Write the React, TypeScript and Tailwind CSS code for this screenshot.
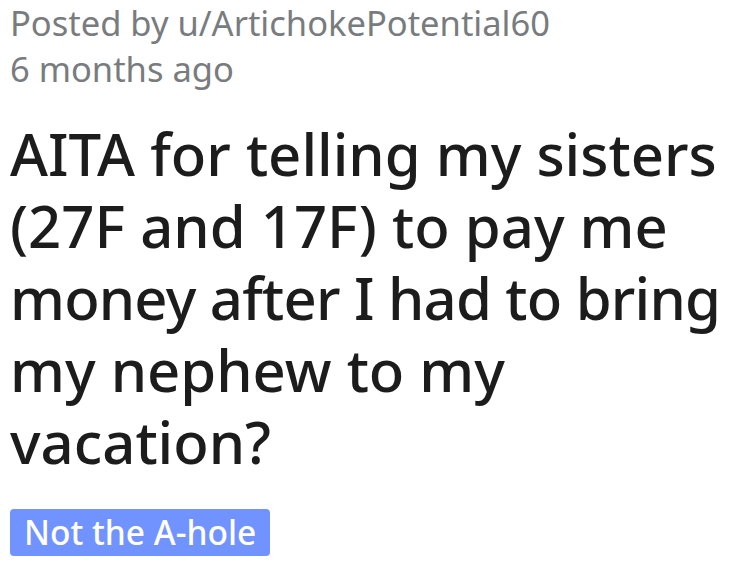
import React from "react";

export default function App() {
  return (
    <div
      className="w-[729px] h-[566px] bg-white overflow-hidden pl-[10px]"
      style={{ fontFamily: '"Noto Sans", "Open Sans", sans-serif' }}
    >
      <div className="text-[34.5px] leading-[46px] text-[#787c7e] font-normal whitespace-nowrap">
        <div>Posted by u/ArtichokePotential60</div>
        <div>6 months ago</div>
      </div>
      <h1 className="mt-[26px] text-[58px] leading-[72px] font-medium text-[#1c1c1c] whitespace-nowrap">
        AITA for telling my sisters
        <br />
        (27F and 17F) to pay me
        <br />
        <span className="tracking-[-0.8px]">money after I had to bring</span>
        <br />
        my nephew to my
        <br />
        vacation?
      </h1>
      <div className="mt-[31px] flex">
        <span className="inline-flex items-center h-[47px] px-[14px] rounded-[4px] bg-[#7193ff] text-white text-[33.5px] font-medium">
          Not the A-hole
        </span>
      </div>
    </div>
  );
}
